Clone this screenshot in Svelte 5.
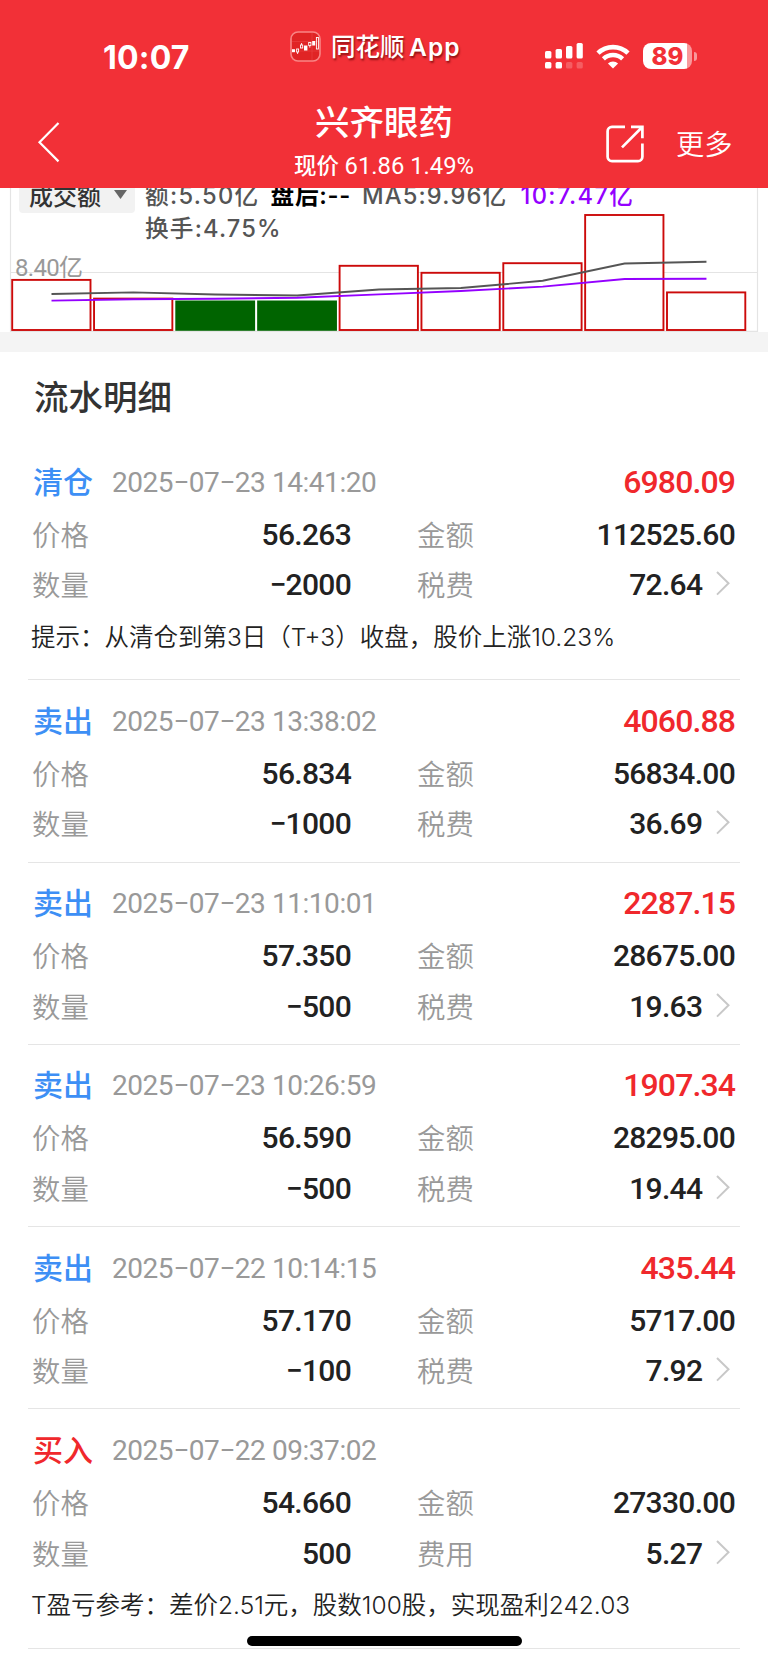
<script lang="ts">
  interface Trade {
    type: string;
    side: 'sell' | 'buy';
    time: string;
    profit?: string;
    price: string;
    amount: string;
    count: string;
    feeLabel: string;
    fee: string;
    hint?: string;
  }

  const trades: Trade[] = [
    { type: '清仓', side: 'sell', time: '2025−07−23 14:41:20', profit: '6980.09', price: '56.263', amount: '112525.60', count: '−2000', feeLabel: '税费', fee: '72.64', hint: '提示：从清仓到第3日（T+3）收盘，股价上涨10.23%' },
    { type: '卖出', side: 'sell', time: '2025−07−23 13:38:02', profit: '4060.88', price: '56.834', amount: '56834.00', count: '−1000', feeLabel: '税费', fee: '36.69' },
    { type: '卖出', side: 'sell', time: '2025−07−23 11:10:01', profit: '2287.15', price: '57.350', amount: '28675.00', count: '−500', feeLabel: '税费', fee: '19.63' },
    { type: '卖出', side: 'sell', time: '2025−07−23 10:26:59', profit: '1907.34', price: '56.590', amount: '28295.00', count: '−500', feeLabel: '税费', fee: '19.44' },
    { type: '卖出', side: 'sell', time: '2025−07−22 10:14:15', profit: '435.44', price: '57.170', amount: '5717.00', count: '−100', feeLabel: '税费', fee: '7.92' },
    { type: '买入', side: 'buy', time: '2025−07−22 09:37:02', price: '54.660', amount: '27330.00', count: '500', feeLabel: '费用', fee: '5.27', hint: 'T盈亏参考：差价2.51元，股数100股，实现盈利242.03' }
  ];

  // top edge of each volume bar, baseline is 142
  const bars = [
    { top: 91.9, up: true },
    { top: 110.6, up: true },
    { top: 112.5, up: false },
    { top: 112.5, up: false },
    { top: 77.8, up: true },
    { top: 84.8, up: true },
    { top: 75.2, up: true },
    { top: 27, up: true },
    { top: 104.4, up: true }
  ];
  const barX = (i: number) => 12.2 + i * 81.85;

  const ma5 = [106, 104.4, 106.5, 107.5, 101.5, 100, 92.8, 75.5, 73.7];
  const ma10 = [112.6, 111.2, 110.7, 109.8, 106.4, 103, 98.6, 91, 90.7];
  const points = (ys: number[]) => ys.map((y, i) => `${51.5 + i * 81.87},${y}`).join(' ');
</script>

<div class="screen">
  <header>
    <div class="status-bar">
      <span class="clock">10:07</span>
      <div class="app-tag">
        <svg width="31" height="31" viewBox="0 0 31 31">
          <rect x="1" y="1" width="29" height="29" rx="7" fill="#e02425" stroke="#f98585" stroke-width="1.6" />
          <path d="M2 10.5h27M2 20h27M22 2v27" stroke="#ea4444" stroke-width="0.6" />
          <g fill="#fff">
            <rect x="2" y="18.2" width="3" height="3" />
            <rect x="14" y="14.5" width="3.4" height="5" />
            <rect x="22.2" y="10" width="3" height="4.5" />
          </g>
          <g fill="none" stroke="#fff" stroke-width="0.9">
            <rect x="6.6" y="18" width="2" height="3" />
            <path d="M7.6 21v2M11.6 12v2M19.8 15v1.6" />
            <rect x="10.5" y="14" width="2.2" height="3" />
            <rect x="18.7" y="11.5" width="2.2" height="3" />
            <rect x="26.4" y="6.5" width="2" height="11.5" />
          </g>
        </svg>
        <span>同花顺 <b>App</b></span>
      </div>
      <div class="indicators">
        <svg width="38" height="27" viewBox="0 0 38 27" fill="#fff">
          <rect x="0" y="9" width="6.4" height="7.6" rx="1.6" />
          <rect x="10.6" y="7" width="6.4" height="9.6" rx="1.6" />
          <rect x="21" y="4" width="6.4" height="12.6" rx="1.6" />
          <rect x="31.6" y="1" width="6.2" height="15.6" rx="1.6" />
          <rect x="0" y="20" width="6.4" height="6.6" rx="1.6" />
          <rect x="10.6" y="20" width="6.4" height="6.6" rx="1.6" />
          <rect x="21" y="20" width="6.4" height="6.6" rx="1.6" opacity="0.22" />
          <rect x="31.6" y="20" width="6.2" height="6.6" rx="1.6" opacity="0.22" />
        </svg>
        <svg class="wifi" width="34" height="25" viewBox="0 0 34 25" fill="none" stroke="#fff">
          <path d="M2 9.2A21.5 21.5 0 0 1 32 9.2" stroke-width="4.6" />
          <path d="M7.4 14.9A13.8 13.8 0 0 1 26.6 14.9" stroke-width="4.4" />
          <path d="M17 24.6l-5.1-5.1a7.3 7.3 0 0 1 10.2 0z" fill="#fff" stroke="none" />
        </svg>
        <div class="battery">89</div>
        <i class="battery-cap"></i>
      </div>
    </div>

    <div class="nav-bar">
      <svg class="back" width="24" height="42" viewBox="0 0 24 42">
        <path d="M21.5 2L2.5 21.3L21.5 40.4" fill="none" stroke="#fff" stroke-width="2.2" />
      </svg>
      <div class="stock">
        <h1>兴齐眼药</h1>
        <p>现价 <b>61.86 1.49%</b></p>
      </div>
      <svg class="share" width="38" height="38" viewBox="0 0 38 38" fill="none" stroke="#fff" stroke-width="2.7">
        <path d="M19 1.8H6a4.4 4.4 0 0 0-4.4 4.4v25.6A4.4 4.4 0 0 0 6 36.2h26a4.4 4.4 0 0 0 4.4-4.4V18.5" />
        <path d="M25 1.8h11.4v11.4M36 2.2L16 22.4" />
      </svg>
      <span class="more">更多</span>
    </div>
  </header>

  <section class="chart">
    <svg class="plot" width="768" height="144" viewBox="0 0 768 144">
      <path d="M10.5 0V144M757.5 0V144M11 84.5H757M11 143.3H757" stroke="#e4e4e4" stroke-width="1.2" />
      {#each bars as bar, i}
        {#if bar.up}
          <rect x={barX(i)} y={bar.top} width="78.3" height={142 - bar.top} fill="#fff" stroke="#cc0a0a" stroke-width="1.9" />
        {:else}
          <rect x={barX(i) - 0.6} y={bar.top} width="79.8" height={142.8 - bar.top} fill="#006400" />
        {/if}
      {/each}
      <polyline points={points(ma5)} fill="none" stroke="#555" stroke-width="1.9" />
      <polyline points={points(ma10)} fill="none" stroke="#9400ff" stroke-width="1.9" />
    </svg>
    <div class="legend">
      <div class="picker">
        <span>成交额</span>
        <svg width="13" height="9" viewBox="0 0 13 9"><path d="M0 0h13L6.5 9z" fill="#666" /></svg>
      </div>
      <div class="values">
        <div class="line">
          <span class="turnover">额:5.50亿</span>
          <span class="after">盘后:--</span>
          <span class="ma5">MA5:9.96亿</span>
          <span class="ma10">10:7.47亿</span>
        </div>
        <div class="line">换手:4.75%</div>
      </div>
    </div>
    <div class="axis">8.40亿</div>
  </section>

  <main>
    <h2>流水明细</h2>
    {#each trades as trade}
      <article>
        <div class="head">
          <span class="type {trade.side}">{trade.type}</span>
          <time>{trade.time}</time>
          {#if trade.profit}
            <span class="profit">{trade.profit}</span>
          {/if}
        </div>
        <div class="row">
          <span class="label">价格</span>
          <span class="num">{trade.price}</span>
          <span class="label">金额</span>
          <span class="num">{trade.amount}</span>
        </div>
        <div class="row">
          <span class="label">数量</span>
          <span class="num">{trade.count}</span>
          <span class="label">{trade.feeLabel}</span>
          <span class="num">
            {trade.fee}
            <svg class="arrow" width="14" height="25" viewBox="0 0 14 25">
              <path d="M1 1L12.5 12.3L1 23.6" fill="none" stroke="#c8c8c8" stroke-width="2" />
            </svg>
          </span>
        </div>
        {#if trade.hint}
          <p class="hint">{trade.hint}</p>
        {/if}
      </article>
    {/each}
  </main>

  <div class="home-indicator"></div>
</div>

<style>
  :global(body) {
    background: #fff;
  }

  .screen {
    position: relative;
    width: 768px;
    height: 1663px;
    overflow: hidden;
    background: #fff;
    color: #222;
    font-family: Roboto, 'Noto Sans CJK SC', sans-serif;
    white-space: nowrap;
  }

  h1, h2, p {
    margin: 0;
    font-weight: 500;
  }

  header {
    height: 188px;
    background: #f23037;
    color: #fff;
  }

  .status-bar {
    display: flex;
    height: 95px;
  }

  .clock {
    width: 187px;
    padding: 38px 0 0 103px;
    font: 700 32px/40px Inter, sans-serif;
    letter-spacing: 0.2px;
  }

  .app-tag {
    display: flex;
    width: 255px;
    height: 31px;
    padding-top: 31px;
    gap: 10px;
    font: 500 24.5px/32px Inter, 'Noto Sans CJK SC', sans-serif;
    text-shadow: 1px 2px 2px rgba(90, 0, 0, 0.65);
  }

  .app-tag b {
    margin-left: -2px;
    font-weight: 600;
    letter-spacing: 1.1px;
  }

  .indicators {
    display: flex;
    height: 27px;
    padding-top: 42px;
  }

  .wifi {
    margin: 2px 0 0 13px;
  }

  .battery {
    width: 49px;
    height: 26px;
    margin: 1px 0 0 13px;
    border-radius: 8px;
    background: linear-gradient(90deg, #fff 44px, #f9989b 44px);
    color: #f23037;
    font: 800 24px/27px Inter, sans-serif;
    text-align: center;
  }

  .battery-cap {
    width: 3px;
    height: 9px;
    margin: 10px 0 0 2px;
    border-radius: 0 4px 4px 0;
    background: #f9989b;
  }

  .nav-bar {
    display: flex;
    height: 93px;
  }

  .back {
    margin: 26px 0 0 37px;
  }

  .stock {
    flex: none;
    width: 446px;
    margin-left: 100px;
    padding-top: 2px;
    text-align: center;
  }

  .stock h1 {
    font-size: 34.5px;
    line-height: 53px;
  }

  .stock p {
    font-size: 22.5px;
    line-height: 33px;
  }

  .stock b {
    font-size: 23.8px;
    font-weight: 400;
  }

  .share {
    flex: none;
    margin: 30px 0 0 -1px;
  }

  .more {
    margin: 27px 0 0 32px;
    font: 350 28.3px/42px 'Noto Sans CJK SC', sans-serif;
  }

  .chart {
    position: relative;
    height: 144px;
    overflow: hidden;
    border-bottom: 20px solid #f4f4f4;
  }

  .plot {
    position: absolute;
    inset: 0;
  }

  .legend {
    position: relative;
    display: flex;
    margin-top: -9px;
  }

  .picker {
    display: flex;
    align-items: center;
    width: 116px;
    height: 34px;
    margin-left: 19px;
    gap: 13px;
    border-radius: 4px;
    background: #f2f2f2;
    color: #333;
    font: 500 24px/32px 'Noto Sans CJK SC', sans-serif;
    box-sizing: border-box;
    padding: 0 0 3px 10px;
  }

  .values {
    padding: 1px 0 0 10px;
    color: #555;
    font: 500 23.7px/32px Inter, 'Noto Sans CJK SC', sans-serif;
    letter-spacing: 1.15px;
  }

  .line {
    display: flex;
    height: 32.5px;
    gap: 11px;
  }

  .turnover {
    letter-spacing: 1.3px;
  }

  .after {
    color: #000;
    font-weight: 600;
    letter-spacing: 0.7px;
  }

  .ma10 {
    margin-left: 2px;
    color: #9400ff;
    letter-spacing: 1.4px;
  }

  .axis {
    position: relative;
    margin: 7px 0 0 15px;
    color: #999;
    font-size: 24px;
    line-height: 32px;
    letter-spacing: -0.7px;
  }

  main {
    padding: 1px 28px 0;
  }

  h2 {
    height: 88px;
    padding-left: 6px;
    font-size: 34.5px;
    line-height: 90px;
    color: #333;
  }

  article {
    padding: 15.5px 5px 12.4px;
    border-bottom: 1px solid #e5e5e5;
  }

  .head {
    display: flex;
    height: 52px;
    line-height: 51px;
  }

  .type {
    width: 79px;
    font-size: 30px;
    font-weight: 500;
  }

  .sell {
    color: #3d8ff5;
  }

  .buy {
    color: #f0282c;
  }

  time {
    color: #999;
    font-size: 28px;
    letter-spacing: -0.45px;
  }

  .profit {
    margin-left: auto;
    color: #f0282c;
    font-size: 32px;
    font-weight: 500;
    letter-spacing: -0.9px;
  }

  .row {
    display: grid;
    grid-template-columns: 59px 259px 126px 1fr;
    height: 50.7px;
    line-height: 51.4px;
  }

  .label {
    margin-left: -1px;
    color: #999;
    font: 350 28.4px/49px 'Noto Sans CJK SC', sans-serif;
  }

  .row .label:nth-child(3) {
    padding-left: 67px;
  }

  .num {
    font-size: 30px;
    font-weight: 500;
    letter-spacing: -0.7px;
    text-align: right;
  }

  .arrow {
    margin: 0 5px 0 7px;
    vertical-align: -1px;
  }

  .hint {
    height: 57px;
    margin-left: -2px;
    font: 350 24.5px/55px Inter, 'Noto Sans CJK SC', sans-serif;
  }

  .home-indicator {
    position: absolute;
    left: 247px;
    bottom: 17px;
    width: 275px;
    height: 10px;
    border-radius: 5px;
    background: #000;
  }
</style>
